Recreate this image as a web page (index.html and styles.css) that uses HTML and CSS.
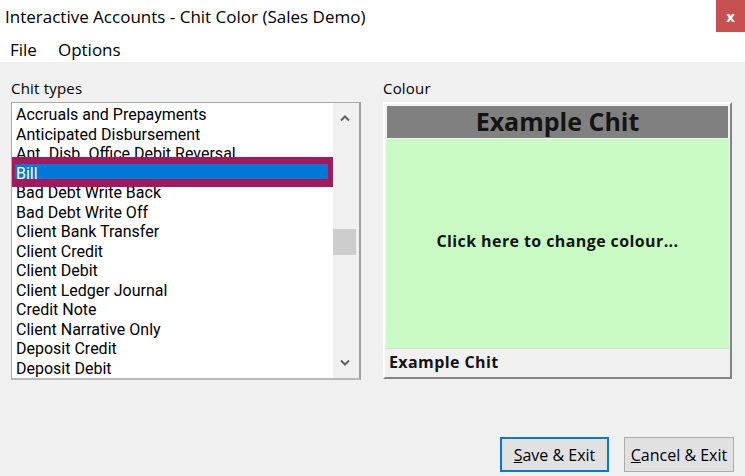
FILE: index.html
```html
<!DOCTYPE html>
<html lang="en">
<head>
    <meta charset="UTF-8">
    <title>Chit Color</title>
    <link rel="stylesheet" href="styles.css">
</head>
<body>
<div class="titlebar">
    <span class="title">Interactive Accounts - Chit Color (Sales Demo)</span>
    <span class="close">x</span>
</div>
<div class="menubar">
    <span>File</span>
    <span>Options</span>
</div>
<div class="content">
    <div class="panes">
        <div class="pane">
            <div class="label">Chit types</div>
            <div class="listbox">
                <ul class="items">
                    <li>Accruals and Prepayments</li>
                    <li>Anticipated Disbursement</li>
                    <li>Ant. Disb. Office Debit Reversal</li>
                    <li class="selected">Bill</li>
                    <li>Bad Debt Write Back</li>
                    <li>Bad Debt Write Off</li>
                    <li>Client Bank Transfer</li>
                    <li>Client Credit</li>
                    <li>Client Debit</li>
                    <li>Client Ledger Journal</li>
                    <li>Credit Note</li>
                    <li>Client Narrative Only</li>
                    <li>Deposit Credit</li>
                    <li>Deposit Debit</li>
                </ul>
                <div class="scrollbar">
                    <div class="arrow">
                        <svg width="10" height="6" viewBox="0 0 10 6"><polyline points="1,5.5 5,1.5 9,5.5" fill="none" stroke="#606060" stroke-width="2"/></svg>
                    </div>
                    <div class="track">
                        <div class="thumb"></div>
                    </div>
                    <div class="arrow">
                        <svg width="10" height="6" viewBox="0 0 10 6"><polyline points="1,0.5 5,4.5 9,0.5" fill="none" stroke="#606060" stroke-width="2"/></svg>
                    </div>
                </div>
            </div>
        </div>
        <div class="pane">
            <div class="label">Colour</div>
            <div class="chit">
                <div class="chit-head">Example Chit</div>
                <div class="chit-body">Click here to change colour...</div>
                <div class="chit-foot">Example Chit</div>
            </div>
        </div>
    </div>
    <div class="buttons">
        <button class="btn default"><u>S</u>ave &amp; Exit</button>
        <button class="btn"><u>C</u>ancel &amp; Exit</button>
    </div>
</div>
</body>
</html>
```

FILE: styles.css
```css
*{
    margin:0;
    padding:0;
    box-sizing: border-box;
}
body{
    width:745px;
    height:476px;
    overflow: hidden;
    background:#f0f0f0;
    font-family: "Open Sans", "Noto Sans", sans-serif;
    color:#000;
}
.titlebar{
    height:37px;
    background:#fff;
    display:flex;
    justify-content: space-between;
    align-items: flex-start;
}
.title{
    font-size:17px;
    line-height:22px;
    padding:6px 0 0 5px;
}
.close{
    width:29px;
    height:32px;
    background:#c75050;
    color:#fff;
    font-weight:bold;
    font-size:15px;
    display:flex;
    align-items:center;
    justify-content:center;
}
.menubar{
    height:25px;
    background:#fff;
    display:flex;
    gap:21px;
    padding-left:10px;
    font-size:17px;
    line-height:25px;
}
.content{
    padding:16px 11px 0 11px;
}
.panes{
    display:flex;
    gap:22px;
}
.pane{
    display:flex;
    flex-direction: column;
    gap:4px;
}
.label{
    font-size:15px;
    line-height:20px;
    letter-spacing:0.2px;
}
.listbox{
    width:350px;
    height:278px;
    border:1px solid #a9a9a9;
    border-right:2px solid #a0a0a0;
    border-bottom:2px solid #b8b8b8;
    background:#fff;
    display:flex;
}
.items{
    flex:1;
    list-style: none;
    padding:2px 5px 0 3px;
    font-family: Roboto, "Open Sans", sans-serif;
    font-size:16px;
    line-height:19.5px;
    white-space: nowrap;
    overflow: hidden;
}
.items li{
    padding-left:1px;
}
.items .selected{
    position: relative;
    background:#0078d7;
    color:#fff;
}
.items .selected::after{
    content:'';
    box-sizing: border-box;
    position:absolute;
    left:-7px;
    right:-7px;
    top:-7px;
    height:30px;
    border:7px solid #a3195b;
    border-bottom-width:8px;
}
.scrollbar{
    width:26px;
    background:#f0f0f0;
    display:flex;
    flex-direction: column;
}
.arrow{
    height:30px;
    display:flex;
    align-items:center;
    justify-content:center;
    padding-right:3px;
}
.track{
    flex:1;
}
.thumb{
    margin-top:96px;
    width:23px;
    height:26px;
    background:#cdcdcd;
}
.chit{
    width:349px;
    height:277px;
    border:2px solid;
    border-color:#fff #858585 #858585 #fff;
    padding:1px;
    display:flex;
    flex-direction: column;
    font-weight:bold;
    color:#141414;
}
.chit-head{
    height:34px;
    background:#808080;
    border:1px solid #f4f4f4;
    text-align:center;
    font-size:25px;
    line-height:31px;
}
.chit-body{
    flex:1;
    background:#cafbc4;
    font-size:16px;
    padding-top:91px;
    text-align:center;
    letter-spacing:0.4px;
}
.chit-foot{
    height:28px;
    border-top:1px solid #dadada;
    font-size:16px;
    line-height:27px;
    padding-left:3px;
    letter-spacing:0.4px;
}
.buttons{
    display:flex;
    justify-content: flex-end;
    gap:15px;
    margin-top:57px;
}
.btn{
    width:110px;
    height:35px;
    background:#e1e1e1;
    border:1px solid #adadad;
    font-family: "Open Sans", "Noto Sans", sans-serif;
    font-size:16px;
    color:#000;
}
.btn.default{
    width:109px;
    border:2px solid #0078d7;
}
```
